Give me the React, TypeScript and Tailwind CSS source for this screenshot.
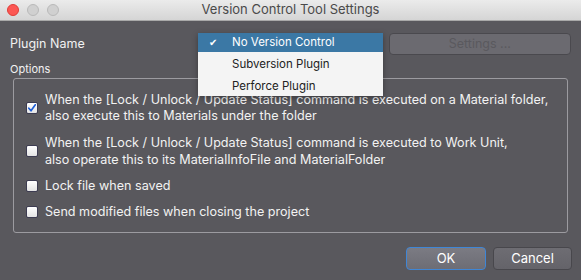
import React from "react";

const font = { fontFamily: "Inter, 'Noto Sans', sans-serif" };

function Check({ checked }: { checked?: boolean }) {
  return (
    <div className="w-[12px] h-[12px] shrink-0 rounded-[2px] border border-[#3d3c52] bg-gradient-to-b from-[#ffffff] to-[#e4e4e4] flex items-center justify-center">
      {checked && (
        <svg width="10" height="10" viewBox="0 0 10 10">
          <path d="M1.8 5.2 L4 7.8 L8.3 1.8" stroke="#1f5fd6" strokeWidth="1.7" fill="none" strokeLinecap="round" strokeLinejoin="round" />
        </svg>
      )}
    </div>
  );
}

export default function App() {
  return (
    <div className="w-[581px] h-[280px] bg-[#59585d] flex flex-col text-[#f2f2f2] overflow-hidden" style={font}>
      {/* title bar */}
      <div className="h-[21px] shrink-0 bg-gradient-to-b from-[#ebebeb] to-[#d5d5d5] border-b border-[#a9a9a9] relative flex items-center justify-center">
        <div className="absolute left-[7px] top-[4px] flex gap-[8px]">
          <div className="w-[12px] h-[12px] rounded-full bg-[#fc5753] border border-[#df3d38]" />
          <div className="w-[12px] h-[12px] rounded-full bg-[#d0d0d0] border border-[#b9b9b9]" />
          <div className="w-[12px] h-[12px] rounded-full bg-[#d0d0d0] border border-[#b9b9b9]" />
        </div>
        <span className="text-[13px] text-[#4a4a4a]">Version Control Tool Settings</span>
      </div>

      <div className="flex flex-col px-[10px] pt-[12px] relative">
        {/* plugin row */}
        <div className="flex items-center h-[22px]">
          <span className="text-[12.5px] w-[188px]">Plugin Name</span>
          <div className="w-[185px]" />
          <button className="ml-[7px] w-[183px] h-[22px] rounded-[4px] border border-[#4a494e] bg-[#6b6a70] text-[12.5px] text-[#5a595e]">
            Settings ...
          </button>
        </div>

        {/* dropdown menu */}
        <div className="absolute left-[198px] top-[12px] w-[185px] h-[63px] overflow-hidden bg-[#f4f4f4] shadow-[0_2px_6px_rgba(0,0,0,0.35)] text-[11.5px] text-[#222] flex flex-col z-10">
          <div className="h-[19px] shrink-0 bg-[#3b78a5] text-white flex items-center">
            <span className="w-[34px] pl-[11px] text-[10px]">✔</span>
            <span>No Version Control</span>
          </div>
          <div className="h-[22px] shrink-0 mt-[2px] flex items-center pl-[34px]">Subversion Plugin</div>
          <div className="h-[22px] shrink-0 flex items-center pl-[34px]">Perforce Plugin</div>
        </div>

        <div className="text-[11px] mt-[7px] leading-[14px]">Options</div>

        {/* group box */}
        <div className="mt-[2px] ml-[3px] mr-[3px] h-[155px] border border-[#9c9ba0] rounded-[3px] flex flex-col px-[12px] pt-[13px] gap-[10px] text-[12.6px] leading-[16px] whitespace-nowrap">
          <div className="flex items-center gap-[7px]">
            <Check checked />
            <div>
              When the [Lock / Unlock / Update Status] command is executed on a Material folder,
              <br />
              also execute this to Materials under the folder
            </div>
          </div>
          <div className="flex items-center gap-[7px]">
            <Check />
            <div className="leading-[17px]">
              When the [Lock / Unlock / Update Status] command is executed to Work Unit,
              <br />
              also operate this to its MaterialInfoFile and MaterialFolder
            </div>
          </div>
          <div className="flex items-center gap-[7px]">
            <Check />
            <div>Lock file when saved</div>
          </div>
          <div className="flex items-center gap-[7px]">
            <Check />
            <div>Send modified files when closing the project</div>
          </div>
        </div>

        {/* buttons */}
        <div className="flex justify-end gap-[7px] mt-[14px] mr-[-1px]">
          <button className="w-[80px] h-[23px] rounded-[4px] border border-[#3f86d6] bg-gradient-to-b from-[#7b7b83] to-[#6d6d75] text-[13px] text-white">
            OK
          </button>
          <button className="w-[79px] h-[23px] rounded-[4px] border border-[#48474c] bg-gradient-to-b from-[#6e6d73] to-[#646369] text-[13px] text-white">
            Cancel
          </button>
        </div>
      </div>
    </div>
  );
}
